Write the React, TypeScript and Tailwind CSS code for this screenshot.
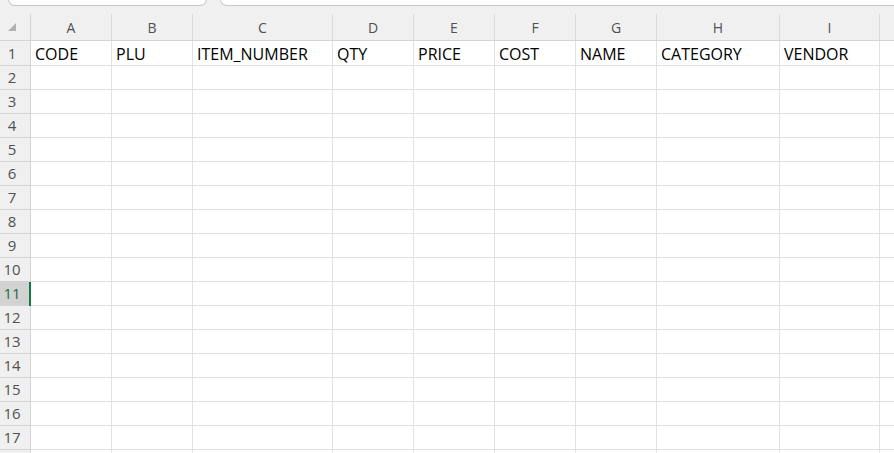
import React from "react";

const columns = [
  { key: "A", width: "w-[81px]" },
  { key: "B", width: "w-[81px]" },
  { key: "C", width: "w-[140px]" },
  { key: "D", width: "w-[81px]" },
  { key: "E", width: "w-[81px]" },
  { key: "F", width: "w-[81px]" },
  { key: "G", width: "w-[81px]" },
  { key: "H", width: "w-[123px]" },
  { key: "I", width: "w-[100px]" },
];

const headers = ["CODE", "PLU", "ITEM_NUMBER", "QTY", "PRICE", "COST", "NAME", "CATEGORY", "VENDOR"];

const rows = Array.from({ length: 18 }, (_, i) => i + 1);

export default function App() {
  const activeRow = 11;

  return (
    <div className="w-[894px] h-[453px] overflow-hidden bg-[#f0f0f0] font-['Open_Sans',sans-serif]">
      {/* formula bar edges */}
      <div className="flex h-[6px] items-end">
        <div className="ml-[8px] w-[199px] h-[12px] bg-white border border-t-0 border-[#c6c6c6] rounded-b-[7px]" />
        <div className="ml-[13px] flex-1 h-[12px] bg-white border border-t-0 border-r-0 border-[#c6c6c6] rounded-bl-[7px]" />
      </div>

      {/* column letters */}
      <div className="flex h-[35px] border-b border-[#d4d4d4] pt-[8px]">
        <div className="w-[31px] shrink-0 border-r border-[#d4d4d4] flex items-center pl-[8px]">
          <svg width="8" height="8" viewBox="0 0 8 8">
            <polygon points="8,0 8,8 0,8" fill="#b1b1b1" />
          </svg>
        </div>
        {columns.map((c) => (
          <div
            key={c.key}
            className={`${c.width} shrink-0 border-r border-[#dadada] flex items-center justify-center text-[14px] text-[#505050]`}
          >
            {c.key}
          </div>
        ))}
        <div className="flex-1" />
      </div>

      {/* grid body */}
      {rows.map((r) => {
        const active = r === activeRow;
        return (
          <div key={r} className={`flex ${r === 1 ? "h-[25px]" : "h-[24px]"}`}>
            <div
              className={`relative w-[31px] shrink-0 border-r border-b border-[#d4d4d4] flex items-center justify-center pr-[6px] text-[15px] ${
                active ? "bg-[#d2d2d2] text-[#1d6b43]" : "bg-[#f0f0f0] text-[#505050]"
              }`}
            >
              {r < 18 ? r : ""}
              {active && <div className="absolute right-[-1px] top-0 bottom-[-1px] w-[2px] bg-[#107c41]" />}
            </div>
            {columns.map((c, i) => (
              <div
                key={c.key}
                className={`${c.width} shrink-0 bg-white border-r border-b border-[#e1e1e1] flex items-center pl-[4px] pt-[2px] text-[16px] text-black whitespace-nowrap`}
              >
                {r === 1 ? headers[i] : ""}
              </div>
            ))}
            <div className="flex-1 bg-white border-b border-[#e1e1e1]" />
          </div>
        );
      })}
    </div>
  );
}
